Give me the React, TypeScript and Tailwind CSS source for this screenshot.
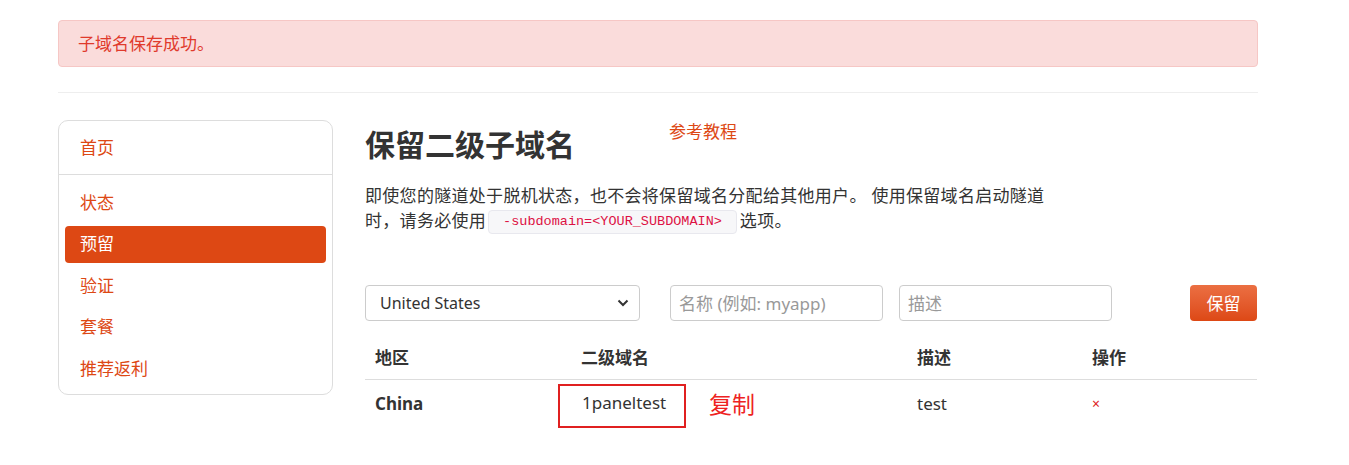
import React from 'react';

const font = "font-['Noto_Sans','Noto_Sans_CJK_SC',sans-serif]";

const navItems = ['状态', '预留', '验证', '套餐', '推荐返利'];

function Sidebar() {
  return (
    <div className="w-[275px] shrink-0 border border-[#dddddd] rounded-[10px] h-[275px]">
      <div className="h-[54px] border-b border-[#dddddd] flex items-center px-[21px] text-[17px] text-[#dd4814]">
        首页
      </div>
      <div className="px-[6px] pt-[9px] flex flex-col gap-[4.5px]">
        {navItems.map((item) => (
          <div
            key={item}
            className={
              item === '预留'
                ? 'h-[37px] rounded-[4px] bg-[#dd4814] text-white flex items-center px-[15px] text-[17px]'
                : 'h-[37px] flex items-center px-[15px] text-[17px] text-[#dd4814]'
            }
          >
            {item}
          </div>
        ))}
      </div>
    </div>
  );
}

function ReserveForm() {
  return (
    <div className="flex items-center h-[36px] mt-[51px]">
      <div className="relative w-[275px] h-[36px] border border-[#cccccc] rounded-[4px] flex items-center px-[14px] text-[16px] text-[#333333]">
        United States
        <svg className="absolute right-[10px] top-[12px]" width="12" height="10" viewBox="0 0 12 10">
          <path d="M1.5 2.5 L6 7 L10.5 2.5" fill="none" stroke="#333" strokeWidth="2" />
        </svg>
      </div>
      <div className="ml-[30px] w-[213px] h-[36px] border border-[#cccccc] rounded-[4px] flex items-center px-[8px] text-[17px] text-[#999999]">
        名称 (例如: myapp)
      </div>
      <div className="ml-[16px] w-[213px] h-[36px] border border-[#cccccc] rounded-[4px] flex items-center px-[8px] text-[17px] text-[#999999]">
        描述
      </div>
      <button className="ml-auto w-[67px] h-[36px] rounded-[4px] bg-gradient-to-b from-[#eb6f42] to-[#dd4814] text-white text-[17px] flex items-center justify-center">
        保留
      </button>
    </div>
  );
}

function DomainTable() {
  return (
    <div className="mt-[15px] text-[17px] text-[#333333]">
      <div className="flex h-[44px] items-center font-bold border-b border-[#dddddd]">
        <div className="w-[206px] pl-[10px]">地区</div>
        <div className="w-[336px] pl-[10px]">二级域名</div>
        <div className="w-[175px] pl-[10px]">描述</div>
        <div className="w-[175px] pl-[10px]">操作</div>
      </div>
      <div className="flex h-[46px] items-center">
        <div className="w-[206px] pl-[10px] font-bold">China</div>
        <div className="w-[336px] flex items-center">
          <div className="ml-[-13px] mt-[6px] w-[128px] h-[44px] border-2 border-[#e02020] pl-[22px] pb-[8px] flex items-center">
            1paneltest
          </div>
          <span className="ml-[23px] text-[23px] text-[#ee2222] mt-[2px]">复制</span>
        </div>
        <div className="w-[175px] pl-[10px]">test</div>
        <div className="w-[175px] pl-[10px] text-[#dd2222] text-[14px]">×</div>
      </div>
    </div>
  );
}

export default function App() {
  return (
    <div className={`${font} bg-white w-[1349px] h-[465px] overflow-hidden`}>
      <div className="ml-[58px] w-[1200px] pt-[20px]">
        <div className="h-[47px] rounded-[4px] bg-[#fadcdb] border border-[#f6c7c5] flex items-center px-[19px] text-[17px] text-[#e03a2c]">
          子域名保存成功。
        </div>
        <div className="mt-[25px] border-t border-[#eeeeee]" />
        <div className="flex mt-[27px]">
          <Sidebar />
          <div className="ml-[32px] w-[892px]">
            <div className="flex">
              <h1 className="text-[30px] font-bold text-[#333333] leading-[34px] mt-[8px]">保留二级子域名</h1>
              <a className="ml-[94px] text-[17px] text-[#dd4814] leading-[24px]">参考教程</a>
            </div>
            <p className="mt-[21px] w-[700px] text-[17px] leading-[25px] text-[#333333] tracking-[0.3px]">
              即使您的隧道处于脱机状态，也不会将保留域名分配给其他用户。 使用保留域名启动隧道时，请务必使用
              <code className="inline-block align-middle h-[24px] leading-[22px] ml-[2px] mr-[3px] px-[14px] rounded-[4px] bg-[#f7f7f9] border border-[#e8e8ee] font-['Liberation_Mono',monospace] text-[13.5px] tracking-normal text-[#dd1144]">
                -subdomain=&lt;YOUR_SUBDOMAIN&gt;
              </code>
              选项。
            </p>
            <ReserveForm />
            <DomainTable />
          </div>
        </div>
      </div>
    </div>
  );
}
